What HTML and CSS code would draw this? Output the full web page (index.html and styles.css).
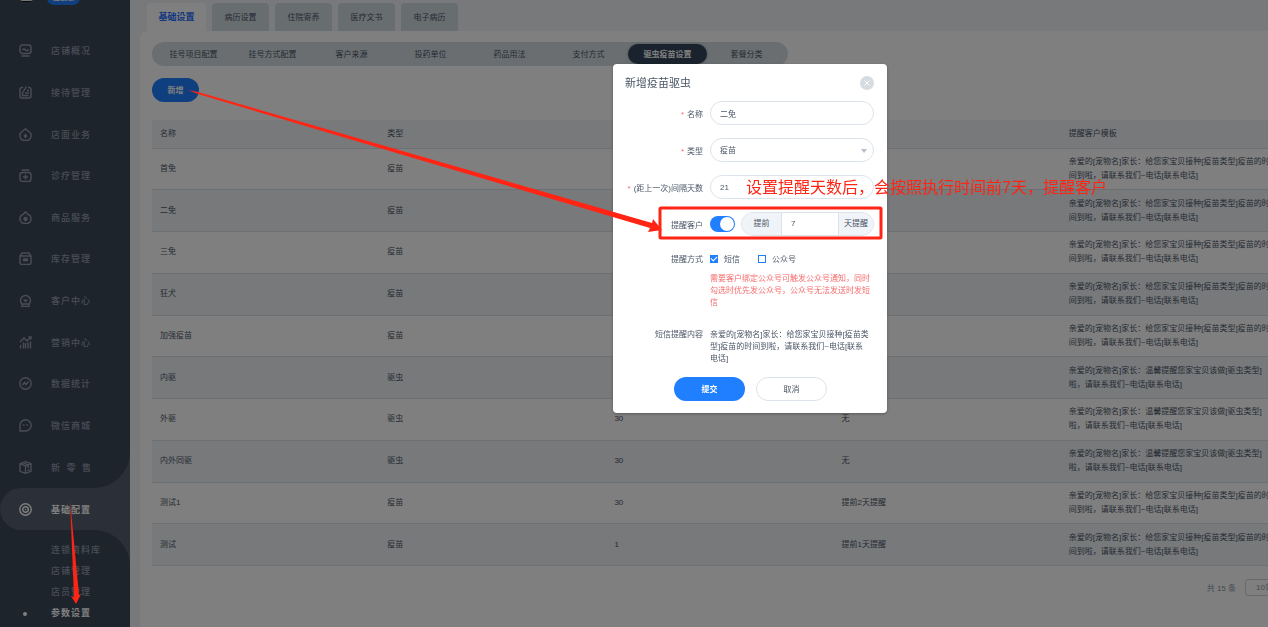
FILE: index.html
```html
<!DOCTYPE html>
<html lang="zh-CN">
<head>
  <meta charset="UTF-8">
  <title>参数设置</title>
  <link rel="stylesheet" href="styles.css">
</head>
<body>
  <div class="app">
    <aside class="sidebar">
      <div class="brand">
        <span class="brand-logo"></span>
        <span class="brand-badge">连锁版</span>
      </div>
      <nav>
        <ul class="menu">
          <li><a href="#"><svg viewBox="0 0 13 13"><rect x="1" y="1" width="11" height="8.5" rx="2.5"/><path d="M3.5 6q1.5-2 3 0t3-.8M2.5 12h8"/></svg>店铺概况</a></li>
          <li><a href="#"><svg viewBox="0 0 13 13"><path d="M4 1.5H3a2 2 0 0 0-2 2V10a2 2 0 0 0 2 2h7a2 2 0 0 0 2-2V3.5a2 2 0 0 0-2-2H9M7.5.5L3.5 7v2.500h6M6 7h4M8 4.500h2"/></svg>接待管理</a></li>
          <li><a href="#"><svg viewBox="0 0 13 13"><path d="M6.5.8L1 5.5V8a4.500 4.500 0 0 0 4.500 4.500h2A4.500 4.500 0 0 0 12 8V5.500z"/><path class="solid" d="M6.500 5.500l2 2.500-2 2.500-2-2.500z"/></svg>店面业务</a></li>
          <li><a href="#"><svg viewBox="0 0 13 13"><rect x="1" y="3.5" width="11" height="9" rx="2.5"/><path d="M3.500 2V1h6v1M6.500 5.500v5M4 8h5"/></svg>诊疗管理</a></li>
          <li><a href="#"><svg viewBox="0 0 13 13"><path d="M4 3.500C2 4 1 6 1 8a4.500 4.500 0 0 0 4.500 4.500h2A4.500 4.500 0 0 0 12 8c0-2-1-4-3-4.500L6.500.8z"/><circle class="solid" cx="6.5" cy="8" r="2.2"/></svg>商品服务</a></li>
          <li><a href="#"><svg viewBox="0 0 13 13"><path d="M3 1h7l2 3v6.500a2 2 0 0 1-2 2H3a2 2 0 0 1-2-2V4zM1 4h11M4 7h5M4 8.500h5"/></svg>库存管理</a></li>
          <li><a href="#"><svg viewBox="0 0 13 13"><path d="M3 10a5 5 0 1 1 7 0v2.500H3zM3 10h7"/><path class="solid" d="M4 5.500h5L6.500 8.500z"/></svg>客户中心</a></li>
          <li><a href="#"><svg viewBox="0 0 13 13"><path d="M1 6l4-4 3 3 4-4M9.500 1H12v2.500M1.500 9v3.500M4.500 6.500v6M6.500 7v5.500M9 6.500v6M11.500 5.500v7"/></svg>营销中心</a></li>
          <li><a href="#"><svg viewBox="0 0 13 13"><circle cx="6.5" cy="6.5" r="5.7"/><path d="M3.500 8l2-2.500L7 7.500l2.500-3"/></svg>数据统计</a></li>
          <li><a href="#"><svg viewBox="0 0 13 13"><path d="M1 12V6.500A5.600 5.600 0 1 1 6.600 12z"/><path d="M4 6h1.500M7.500 6H9"/></svg>微信商城</a></li>
          <li><a href="#"><svg viewBox="0 0 13 13"><path d="M6.500.7l5.500 2v7.600l-5.500 2-5.500-2V2.700zM1 2.700l5.500 2.200L12 2.700M6.500 4.900v7.400M3.700 1.700l5.500 2.200v3M8.500 9.500L10.500 9"/></svg>新&ensp;零&ensp;售</a></li>
        </ul>
        <div class="menu-open">
          <a href="#"><svg viewBox="0 0 13 13"><circle cx="6.5" cy="6.5" r="5.7"/><circle cx="6.5" cy="6.5" r="2.8"/><circle class="solid" cx="6.5" cy="6.5" r=".8"/></svg>基础配置</a>
        </div>
        <ul class="submenu">
          <li><a href="#">连锁资料库</a></li>
          <li><a href="#">店铺管理</a></li>
          <li><a href="#">店员管理</a></li>
          <li class="current"><a href="#">参数设置</a></li>
        </ul>
      </nav>
    </aside>

    <main class="main">
      <div class="tabs">
        <button class="tab active">基础设置</button>
        <button class="tab">病历设置</button>
        <button class="tab">住院寄养</button>
        <button class="tab">医疗文书</button>
        <button class="tab">电子病历</button>
      </div>

      <section class="panel">
        <div class="pills">
          <button class="pill">挂号项目配置</button>
          <button class="pill">挂号方式配置</button>
          <button class="pill">客户来源</button>
          <button class="pill">投药单位</button>
          <button class="pill">药品用法</button>
          <button class="pill">支付方式</button>
          <button class="pill active">驱虫疫苗设置</button>
          <button class="pill">套餐分类</button>
        </div>

        <button class="btn-add">新增</button>

        <table class="list">
          <thead>
            <tr><th>名称</th><th>类型</th><th>间隔天数</th><th>提醒客户</th><th>提醒客户模板</th></tr>
          </thead>
          <tbody>
            <tr><td>首免</td><td>疫苗</td><td>21</td><td>无</td><td>亲爱的[宠物名]家长：给您家宝贝接种[疫苗类型]疫苗的时<br>间到啦，请联系我们~电话[联系电话]</td></tr>
            <tr><td>二免</td><td>疫苗</td><td>21</td><td>无</td><td>亲爱的[宠物名]家长：给您家宝贝接种[疫苗类型]疫苗的时<br>间到啦，请联系我们~电话[联系电话]</td></tr>
            <tr><td>三免</td><td>疫苗</td><td>21</td><td>无</td><td>亲爱的[宠物名]家长：给您家宝贝接种[疫苗类型]疫苗的时<br>间到啦，请联系我们~电话[联系电话]</td></tr>
            <tr><td>狂犬</td><td>疫苗</td><td>30</td><td></td><td>亲爱的[宠物名]家长：给您家宝贝接种[疫苗类型]疫苗的时<br>间到啦，请联系我们~电话[联系电话]</td></tr>
            <tr><td>加强疫苗</td><td>疫苗</td><td>30</td><td></td><td>亲爱的[宠物名]家长：给您家宝贝接种[疫苗类型]疫苗的时<br>间到啦，请联系我们~电话[联系电话]</td></tr>
            <tr><td>内驱</td><td>驱虫</td><td>30</td><td>无</td><td>亲爱的[宠物名]家长：温馨提醒您家宝贝该做[驱虫类型]<br>啦，请联系我们~电话[联系电话]</td></tr>
            <tr><td>外驱</td><td>驱虫</td><td>30</td><td>无</td><td>亲爱的[宠物名]家长：温馨提醒您家宝贝该做[驱虫类型]<br>啦，请联系我们~电话[联系电话]</td></tr>
            <tr><td>内外同驱</td><td>驱虫</td><td>30</td><td>无</td><td>亲爱的[宠物名]家长：温馨提醒您家宝贝该做[驱虫类型]<br>啦，请联系我们~电话[联系电话]</td></tr>
            <tr><td>测试1</td><td>疫苗</td><td>30</td><td>提前2天提醒</td><td>亲爱的[宠物名]家长：给您家宝贝接种[疫苗类型]疫苗的时<br>间到啦，请联系我们~电话[联系电话]</td></tr>
            <tr><td>测试</td><td>疫苗</td><td>1</td><td>提前1天提醒</td><td>亲爱的[宠物名]家长：给您家宝贝接种[疫苗类型]疫苗的时<br>间到啦，请联系我们~电话[联系电话]</td></tr>
          </tbody>
        </table>

        <div class="pager">
          <span>共 15 条</span>
          <select aria-label="每页条数"><option>10条/页</option></select>
        </div>
      </section>
    </main>
  </div>

  <div class="mask">
    <form class="dialog">
      <header class="dialog-head">
        <h2>新增疫苗驱虫</h2>
        <button type="button" class="close" aria-label="关闭">
          <svg viewBox="0 0 14 14"><path d="M4.500 4.500l5 5M9.500 4.500l-5 5"/></svg>
        </button>
      </header>

      <div class="row">
        <label class="required" for="name">名称</label>
        <input class="field" type="text" id="name" value="二免">
      </div>
      <div class="row">
        <label class="required" for="type">类型</label>
        <div class="select-wrap">
          <select class="field" id="type"><option>疫苗</option><option>驱虫</option></select>
        </div>
      </div>
      <div class="row">
        <label class="required" for="days">(距上一次)间隔天数</label>
        <input class="field" type="text" id="days" value="21">
      </div>
      <div class="row">
        <label for="remind">提醒客户</label>
        <div class="remind">
          <input class="switch" type="checkbox" id="remind" checked>
          <div class="group">
            <span class="prepend">提前</span>
            <input type="text" value="7" aria-label="提前天数">
            <span class="append">天提醒</span>
          </div>
        </div>
      </div>
      <div class="row row-way">
        <span class="label">提醒方式</span>
        <div class="checks">
          <label><input type="checkbox" checked>短信</label>
          <label><input type="checkbox">公众号</label>
        </div>
      </div>
      <p class="tip">需要客户绑定公众号可触发公众号通知，同时勾选时优先发公众号，公众号无法发送时发短信</p>
      <div class="row row-content">
        <span class="label">短信提醒内容</span>
        <p>亲爱的[宠物名]家长：给您家宝贝接种[疫苗类型]疫苗的时间到啦，请联系我们~电话[联系<br>电话]</p>
      </div>

      <footer class="actions">
        <button type="button" class="submit">提交</button>
        <button type="button" class="cancel">取消</button>
      </footer>
    </form>
  </div>

  <!-- guide marks on top of the page -->
  <svg class="marks" width="900" height="620">
    <path d="M188 90L198 92L652 223L653 219L662 230L648 232L650 228L420 160L198 94Z"/>
    <path d="M70 500L79 595L81 594L76 604L71 596L74 597Z"/>
    <rect x="660" y="208" width="221" height="30" rx="1"/>
  </svg>
  <p class="note">设置提醒天数后，会按照执行时间前7天，提醒客户</p>
</body>
</html>
```
FILE: styles.css
```css
* {
  box-sizing: border-box;
}

body {
  margin: 0;
  height: 100vh;
  overflow: hidden;
  font-family: "Liberation Sans", "Noto Sans CJK SC", sans-serif;
  font-size: 8px;
  color: #4a5566;
}

button,
input,
select {
  margin: 0;
  padding: 0;
  border: none;
  background: none;
  font: inherit;
  color: inherit;
}

button {
  cursor: pointer;
}

a {
  color: inherit;
  text-decoration: none;
}

ul,
p,
h2 {
  margin: 0;
  padding: 0;
  list-style: none;
}

.app {
  display: flex;
  min-height: 100vh;
  background: #eff2f6;
}

/* sidebar */
.sidebar {
  display: flex;
  flex-direction: column;
  flex: none;
  width: 130px;
  background: #565f6e;
  color: #929cac;
  font-size: 9px;
  font-weight: 500;
  letter-spacing: 1px;
}

.sidebar nav {
  display: flex;
  flex-direction: column;
  flex: 1;
}

.brand {
  display: flex;
  gap: 13px;
  height: 30px;
  padding-left: 19px;
  overflow: hidden;
  background: #3a4858;
}

.brand-logo {
  width: 15px;
  height: 14px;
  margin-top: -12px;
  border-radius: 4px;
  border-bottom: 1px solid #111;
  background: #eee;
}

.brand-badge {
  width: 33px;
  height: 14px;
  margin-top: -9px;
  border-radius: 7px;
  background: #1f7fff;
  color: #fff;
  font-size: 7px;
  line-height: 14px;
  letter-spacing: 0;
  text-align: center;
}

.menu {
  display: grid;
  grid-template-rows: repeat(11, 1fr);
  height: 458px;
  border-bottom-right-radius: 36px;
  background: #3a4858;
}

.menu a,
.menu-open a {
  display: flex;
  align-items: center;
  gap: 19px;
  height: 100%;
  padding-left: 19px;
}

.sidebar svg {
  width: 13px;
  height: 13px;
  fill: none;
  stroke: currentColor;
  stroke-width: 1.4;
}

.sidebar .solid {
  fill: currentColor;
  stroke: none;
}

.menu-open {
  height: 42px;
  background: linear-gradient(90deg, #3a4858 50%, #565f6e 50%);
  color: #fff;
  font-weight: bold;
}

.menu-open a {
  border-radius: 21px 0 0 21px;
  background: #565f6e;
}

.submenu {
  flex: 1;
  padding-top: 10px;
  border-top-right-radius: 36px;
  background: #3a4858;
}

.submenu a {
  display: block;
  padding-left: 51px;
  line-height: 21px;
}

.submenu .current {
  display: flex;
  align-items: center;
  color: #fff;
  font-weight: bold;
}

.submenu .current::before {
  content: "";
  width: 4px;
  height: 4px;
  margin-left: 23px;
  border-radius: 50%;
  background: #fff;
}

.submenu .current a {
  padding-left: 24px;
}

/* content */
.main {
  display: flex;
  flex-direction: column;
  flex: 1;
  min-width: 0;
  padding: 3px 0 0 10px;
  overflow: hidden;
}

.tabs {
  display: flex;
  gap: 6px;
  padding-left: 7px;
}

.tab {
  width: 57px;
  height: 28px;
  padding-bottom: 2px;
  border-radius: 4px 4px 0 0;
  background: #d1dae0;
}

.tab.active {
  width: 59px;
  background: #fff;
  color: #1f6fff;
  font-size: 9px;
  font-weight: bold;
}

.panel {
  flex: 1;
  padding: 11px 0 0 12px;
  border-top-left-radius: 8px;
  background: #fff;
}

.pills {
  display: flex;
  align-items: center;
  width: max-content;
  height: 24px;
  padding: 0 2px;
  border-radius: 12px;
  background: #d4dde3;
}

.pill {
  width: 79px;
  height: 20px;
  padding-bottom: 2px;
  border-radius: 10px;
}

.pill.active {
  background: #34475a;
  box-shadow: 0 0 3px #8a96a3;
  color: #fff;
  font-weight: bold;
}

.btn-add {
  display: block;
  width: 47px;
  height: 24px;
  margin: 12px 0 18px;
  padding-bottom: 2px;
  border-radius: 12px;
  background: #1f7fff;
  color: #fff;
  font-weight: bold;
}

.list {
  width: 100%;
  min-width: 1136px;
  height: 446px;
  table-layout: fixed;
  border-collapse: collapse;
}

.list th,
.list td {
  padding: 0 8px;
  border-bottom: 1px solid #dbe1e7;
  text-align: left;
  font-weight: normal;
  line-height: 14px;
  white-space: nowrap;
}

.list th {
  height: 28px;
  background: #eff2f6;
}

.list tbody tr:nth-child(even) {
  background: #eff2f6;
}

.pager {
  display: flex;
  align-items: center;
  justify-content: flex-end;
  gap: 9px;
  width: 100%;
  min-width: 1136px;
  margin-top: 13px;
  color: #8b96a3;
}

.pager select {
  width: 43px;
  height: 17px;
  padding-left: 10px;
  border: 1px solid #cdd3da;
  border-radius: 3px;
  appearance: none;
}

/* dialog */
.mask {
  position: fixed;
  inset: 0;
  padding: 64px 0 0 613px;
  background: rgba(0, 0, 0, 0.5);
}

.dialog {
  width: 274px;
  padding: 12px 13px 12px 12px;
  border-radius: 4px;
  background: #fff;
  box-shadow: 0 1px 3px rgba(0, 0, 0, 0.3);
}

.dialog-head {
  display: flex;
  align-items: center;
  justify-content: space-between;
  height: 14px;
  margin-bottom: 11px;
}

.dialog-head h2 {
  font-size: 11px;
  font-weight: normal;
  line-height: 14px;
}

.close {
  width: 14px;
  height: 14px;
  border-radius: 50%;
  background: #d5dce2;
}

.close svg {
  display: block;
  stroke: #fff;
}

.row {
  display: grid;
  grid-template-columns: 78px minmax(0, 1fr);
  gap: 7px;
  align-items: center;
  margin-bottom: 13px;
}

.row > label,
.row > .label {
  text-align: right;
  white-space: nowrap;
}

.required::before {
  content: "*";
  margin-right: 3px;
  color: #f56c6c;
}

.field {
  width: 100%;
  height: 24px;
  padding: 0 9px;
  border: 1px solid #dce3ea;
  border-radius: 12px;
  appearance: none;
}

.select-wrap {
  position: relative;
}

.select-wrap::after {
  content: "";
  position: absolute;
  top: 11px;
  right: 7px;
  border: 3px solid transparent;
  border-top: 4px solid #b4bfce;
  border-bottom: none;
}

.remind {
  display: flex;
  align-items: center;
  gap: 6px;
}

.switch {
  flex: none;
  width: 25px;
  height: 16px;
  padding: 1px;
  border-radius: 8px;
  background: #c8d0d8;
  appearance: none;
}

.switch::before {
  content: "";
  display: block;
  width: 14px;
  height: 14px;
  border-radius: 50%;
  background: #fff;
}

.switch:checked {
  background: #1f7fff;
}

.switch:checked::before {
  margin-left: auto;
}

.group {
  display: flex;
  flex: 1;
  min-width: 0;
  height: 24px;
  border: 1px solid #dce3ea;
  border-radius: 12px;
  overflow: hidden;
  line-height: 22px;
  text-align: center;
}

.group .prepend {
  flex: none;
  width: 40px;
  border-right: 1px solid #dce3ea;
  background: #f0f3f7;
}

.group input {
  flex: 1;
  width: 0;
  min-width: 0;
  padding-left: 9px;
}

.group .append {
  flex: none;
  width: 35px;
  border-left: 1px solid #dce3ea;
  background: #f0f3f7;
}

.row-way {
  margin: 17px 0 9px;
}

.checks {
  display: flex;
  gap: 18px;
}

.checks label {
  display: flex;
  align-items: center;
  gap: 6px;
}

.checks input {
  display: grid;
  place-items: center;
  width: 8px;
  height: 8px;
  border: 1px solid #1f7fff;
  appearance: none;
}

.checks input:checked {
  background: #1f7fff;
}

.checks input:checked::before {
  content: "";
  width: 5px;
  height: 3px;
  margin-bottom: 2px;
  border: solid #fff;
  border-width: 0 0 1px 1px;
  transform: rotate(-45deg);
}

.tip {
  margin: 0 0 20px 85px;
  color: #f56c6c;
  line-height: 12px;
}

.row-content {
  align-items: start;
  margin-bottom: 12px;
  line-height: 12px;
}

.actions {
  display: flex;
  gap: 11px;
  padding-left: 49px;
}

.actions button {
  width: 71px;
  height: 24px;
  padding-bottom: 2px;
  border-radius: 12px;
}

.submit {
  background: #1f7fff;
  color: #fff;
  font-weight: bold;
}

.actions .cancel {
  border: 1px solid #dce3ea;
}

/* guide marks */
.marks {
  position: fixed;
  top: 0;
  left: 0;
  fill: #ff2414;
  pointer-events: none;
}

.marks rect {
  fill: none;
  stroke: #ff2414;
  stroke-width: 3;
}

.note {
  position: fixed;
  top: 176px;
  left: 746px;
  color: #ff2414;
  font-size: 16px;
  line-height: 24px;
  white-space: nowrap;
}
```
